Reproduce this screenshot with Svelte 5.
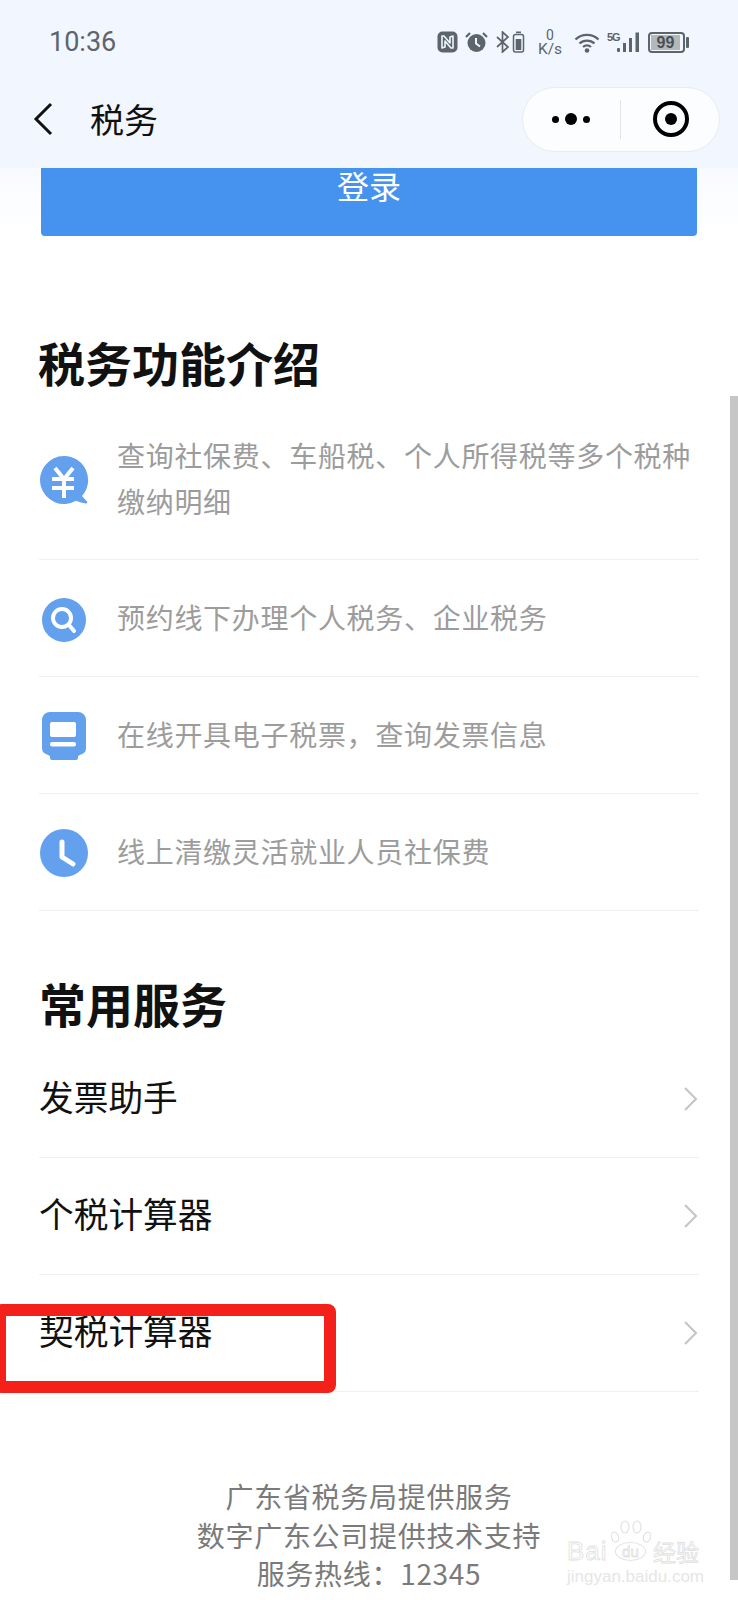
<script>
  const features = [
    { kind: 'yen', lines: ['查询社保费、车船税、个人所得税等多个税种', '缴纳明细'] },
    { kind: 'search', lines: ['预约线下办理个人税务、企业税务'] },
    { kind: 'ticket', lines: ['在线开具电子税票\uFF0C查询发票信息'] },
    { kind: 'clock', lines: ['线上清缴灵活就业人员社保费'] }
  ];
  const services = ['发票助手', '个税计算器', '契税计算器'];
  const hotline = '服务热线\uFF1A12345';
</script>

<div class="page">
  <header class="top">
    <div class="status">
      <span class="time">10:36</span>
      <div class="status-icons">
        <svg class="si" width="21" height="22" viewBox="0 0 21 22">
          <rect x="0.5" y="0.5" width="20" height="21" rx="5" fill="#5c646c" />
          <path d="M5 5v12l3-1V10l6 7h2V5l-3 1v6L7 5z" fill="none" stroke="#f2f7ff" stroke-width="1.6" stroke-linejoin="round" />
        </svg>
        <svg class="si" width="23" height="22" viewBox="0 0 23 22">
          <circle cx="11.5" cy="12" r="9" fill="#5c646c" />
          <path d="M1 6l4-4M22 6l-4-4" stroke="#5c646c" stroke-width="2.2" fill="none" />
          <path d="M11 7v5.5l4 3" stroke="#f2f7ff" stroke-width="2" fill="none" />
        </svg>
        <svg class="si" width="30" height="22" viewBox="0 0 30 22">
          <path d="M2 6l11 10-5.500 5V1L13 6 2 16" stroke="#5c646c" stroke-width="1.7" fill="none" />
          <rect x="18.500" y="3.500" width="10" height="17.500" rx="2" fill="none" stroke="#5c646c" stroke-width="1.500" />
          <rect x="21" y="0.500" width="5" height="1.600" fill="#5c646c" />
          <rect x="20.700" y="8" width="5.600" height="11" fill="#5c646c" />
        </svg>
        <div class="speed"><span>0</span><span class="ks">K/s</span></div>
        <svg class="si wifi" width="26" height="21" viewBox="0 0 26 21">
          <path d="M1.500 7.500a16.500 16.500 0 0 1 23 0M5.500 11.500a11 11 0 0 1 15 0M9 15a6 6 0 0 1 8 0" stroke="#5c646c" stroke-width="2.300" fill="none" />
          <circle cx="13" cy="18.500" r="2.300" fill="#5c646c" />
        </svg>
        <div class="net">
          <span class="five">5G</span>
          <svg width="23" height="21" viewBox="0 0 23 21">
            <rect x="0" y="16" width="3" height="4" rx="1" fill="#5c646c" />
            <rect x="6" y="11" width="3" height="9" fill="#5c646c" />
            <rect x="12" y="6" width="3" height="14" fill="#5c646c" />
            <rect x="18.500" y="0.500" width="3.500" height="19.500" fill="#5c646c" />
          </svg>
        </div>
        <div class="battery"><div class="cell"><span>99</span></div><i></i></div>
      </div>
    </div>
    <div class="nav">
      <svg class="back" width="20" height="34" viewBox="0 0 20 34">
        <path d="M18 2L3 17l15 15" fill="none" stroke="#111" stroke-width="3" />
      </svg>
      <span class="nav-title">税务</span>
      <div class="capsule">
        <div class="dots"><i></i><b></b><i></i></div>
        <span class="sep"></span>
        <svg width="40" height="40" viewBox="0 0 40 40">
          <circle cx="20" cy="20" r="16" fill="none" stroke="#000" stroke-width="4" />
          <circle cx="20" cy="20" r="6" fill="#000" />
        </svg>
      </div>
    </div>
  </header>

  <main class="content">
    <button class="login">登录</button>

    <h2 class="intro-title">税务功能介绍</h2>
    <ul class="features">
      {#each features as f}
        <li class="feature">
          <svg class="ficon" width="50" height="50" viewBox="0 0 50 50">
            {#if f.kind === 'yen'}
              <path d="M25 1A24 24 0 1 0 37 45.800Q42 48 47 48.500Q49 48.500 48 46.500L43 41A24 24 0 0 0 25 1Z" fill="#63a0ee" />
              <path d="M16 13l9 11 9-11M13 24h22M13 33h22M25 24v19" fill="none" stroke="#fff" stroke-width="4" />
            {:else if f.kind === 'search'}
              <circle cx="25" cy="27" r="22" fill="#63a0ee" />
              <circle cx="23" cy="25" r="9" fill="none" stroke="#fff" stroke-width="4" />
              <path d="M30 32l5 6" stroke="#fff" stroke-width="4" stroke-linecap="round" />
            {:else if f.kind === 'ticket'}
              <path d="M11 2h28a8 8 0 0 1 8 8v28q0 3-2 5l-6 3v2q0 2-2 2H13q-2 0-2-2v-2l-6-3q-2-2-2-5V10a8 8 0 0 1 8-8z" fill="#63a0ee" />
              <rect x="11" y="12" width="26" height="15" rx="2" fill="#fff" />
              <rect x="11" y="32" width="26" height="4.500" rx="2" fill="#fff" />
            {:else}
              <circle cx="25" cy="26" r="24" fill="#63a0ee" />
              <path d="M23 15v15l11 7" fill="none" stroke="#fff" stroke-width="5" stroke-linecap="round" stroke-linejoin="round" />
            {/if}
          </svg>
          <div class="ftext">
            {#each f.lines as line}<div>{line}</div>{/each}
          </div>
        </li>
      {/each}
    </ul>

    <h2 class="services-title">常用服务</h2>
    <ul class="services">
      {#each services as s}
        <li class="service">
          <span class="service-name">{s}</span>
          <svg width="16" height="26" viewBox="0 0 16 26">
            <path d="M2 2l11 11L2 24" fill="none" stroke="#c4c4c4" stroke-width="2" />
          </svg>
        </li>
      {/each}
    </ul>

    <footer class="foot">
      <div>广东省税务局提供服务</div>
      <div>数字广东公司提供技术支持</div>
      <div>{hotline}</div>
    </footer>
  </main>

  <div class="scrollbar"></div>

  <div class="annotation"></div>

  <div class="watermark">
    <svg class="paw" width="40" height="24" viewBox="0 0 40 24">
      <g fill="none" stroke="#e2e2e2" stroke-width="1.200">
        <ellipse cx="4" cy="17" rx="3.500" ry="5" transform="rotate(-20 4 17)" />
        <ellipse cx="14" cy="7" rx="4" ry="6" />
        <ellipse cx="26" cy="7" rx="4" ry="6" />
        <ellipse cx="36" cy="17" rx="3.500" ry="5" transform="rotate(20 36 17)" />
      </g>
    </svg>
    <div class="wm-main"><span class="bai">Bai</span><span class="du">du</span><span class="jy">经验</span></div>
    <div class="wm-sub">jingyan.baidu.com</div>
  </div>
</div>

<style>
  :global(body) {
    margin: 0;
    background: #fff;
  }
  .page {
    position: relative;
    width: 738px;
    height: 1600px;
    overflow: hidden;
    font-family: "Noto Sans CJK SC", "Noto Sans", sans-serif;
    background: linear-gradient(#f7faff 0, #f7faff 168px, #fff 232px);
  }
  .top {
    height: 168px;
    background: #f2f7ff;
  }
  .status {
    height: 84px;
    display: flex;
    align-items: center;
    justify-content: space-between;
    padding: 0 49px 0 49px;
  }
  .time {
    font-family: Roboto, sans-serif;
    font-size: 27px;
    color: #5c646c;
  }
  .status-icons {
    display: flex;
    align-items: center;
    gap: 7px;
    height: 22px;
  }
  .si {
    display: block;
    flex: none;
  }
  .speed {
    display: flex;
    flex-direction: column;
    align-items: center;
    width: 26px;
    margin: 0 4px 0 5px;
    font-family: Roboto, sans-serif;
    color: #5c646c;
    font-size: 14px;
    line-height: 14px;
  }
  .ks {
    font-size: 15.500px;
  }
  .net {
    display: flex;
    align-items: flex-end;
  }
  .five {
    font-family: "Liberation Sans", sans-serif;
    font-size: 11px;
    font-weight: 700;
    line-height: 11px;
    color: #5c646c;
    align-self: flex-start;
    width: 10px;
    white-space: nowrap;
    letter-spacing: -1.200px;
  }
  .battery {
    display: flex;
    align-items: center;
    gap: 1px;
    margin-left: 1px;
  }
  .cell {
    box-sizing: border-box;
    width: 37px;
    height: 21px;
    border: 2px solid #5c646c;
    border-radius: 4px;
    padding: 1px;
  }
  .cell span {
    display: block;
    width: 29px;
    height: 15px;
    background: #b4b8b9;
    font-family: "Liberation Sans", sans-serif;
    font-size: 16px;
    font-weight: 700;
    line-height: 15px;
    color: #4a5056;
    text-align: center;
  }
  .battery i {
    width: 3px;
    height: 11px;
    background: #5c646c;
    border-radius: 1px;
  }
  .nav {
    height: 70px;
    display: flex;
    align-items: center;
    padding-left: 33px;
  }
  .back {
    display: block;
  }
  .nav-title {
    margin-left: 37px;
    font-size: 34px;
    line-height: 40px;
    color: #111;
  }
  .capsule {
    margin-left: auto;
    margin-right: 18px;
    box-sizing: border-box;
    width: 198px;
    height: 65px;
    border-radius: 33px;
    border: 1.500px solid #e8ecf2;
    background: #fcfdff;
    display: flex;
    align-items: center;
    padding-left: 28.500px;
  }
  .dots {
    display: flex;
    align-items: center;
    gap: 6px;
  }
  .dots i {
    width: 7px;
    height: 7px;
    border-radius: 50%;
    background: #000;
  }
  .dots b {
    width: 12px;
    height: 12px;
    border-radius: 50%;
    background: #000;
  }
  .sep {
    width: 1px;
    height: 39px;
    margin-left: 30px;
    background: #e2e6ea;
  }
  .capsule svg {
    margin-left: 30px;
  }
  .content {
    display: flow-root;
  }
  .login {
    display: block;
    box-sizing: border-box;
    width: 656px;
    height: 68px;
    margin: 0 0 0 41px;
    padding: 0 0 34px;
    border: 0;
    border-radius: 0 0 4px 4px;
    background: #4593ee;
    color: #fff;
    font: 400 32px/34px "Noto Sans CJK SC", sans-serif;
    text-align: center;
  }
  h2 {
    margin: 0;
    font-size: 47px;
    line-height: 60px;
    font-weight: 700;
    color: #111;
  }
  .intro-title {
    margin: 96px 0 8px 38px;
  }
  ul {
    list-style: none;
    margin: 0 39px;
    padding: 0;
  }
  .feature {
    box-sizing: border-box;
    min-height: 117px;
    display: flex;
    align-items: center;
    gap: 28px;
    border-bottom: 1px solid #efefef;
  }
  .feature:first-child {
    height: 160px;
  }
  .ficon {
    flex: none;
    display: block;
  }
  .ftext {
    padding-bottom: 3px;
    font-size: 28px;
    line-height: 46px;
    color: #9c9c9c;
    white-space: nowrap;
    letter-spacing: 0.7px;
  }
  .services-title {
    margin: 62px 0 8px 39px;
  }
  .service {
    box-sizing: border-box;
    height: 117px;
    display: flex;
    align-items: center;
    justify-content: space-between;
    border-bottom: 1px solid #efefef;
    font-size: 34.700px;
    color: #111;
  }
  .service-name {
    padding-bottom: 6px;
  }
  .foot {
    margin-top: 85px;
    text-align: center;
    font-size: 28px;
    line-height: 38.500px;
    color: #7a7a7a;
    letter-spacing: 0.7px;
  }
  .scrollbar {
    position: absolute;
    left: 730px;
    top: 396px;
    width: 8px;
    height: 1184px;
    background: #c6c6c6;
  }
  .annotation {
    position: absolute;
    left: -6px;
    top: 1304px;
    width: 342px;
    height: 89px;
    box-sizing: border-box;
    border: 12px solid #f4201a;
    border-radius: 8px;
  }
  .watermark {
    position: absolute;
    left: 567px;
    top: 1520px;
    width: 132px;
    font-family: "Liberation Sans", sans-serif;
  }
  .paw {
    position: absolute;
    left: 44px;
    top: 0;
  }
  .wm-main {
    margin-top: 20px;
    display: flex;
    align-items: center;
    height: 22px;
    white-space: nowrap;
    color: transparent;
    -webkit-text-stroke: 0.8px #e0e0e0;
  }
  .bai {
    width: 44px;
    font-size: 26px;
    letter-spacing: 1px;
  }
  .du {
    box-sizing: border-box;
    width: 32px;
    height: 19px;
    margin: 0 7px 0 5px;
    border: 1px solid #e2e2e2;
    border-radius: 50%;
    font-size: 15px;
    line-height: 17px;
    text-align: center;
  }
  .jy {
    font-size: 23px;
    font-family: "Noto Sans CJK SC", sans-serif;
  }
  .wm-sub {
    margin-top: 6px;
    font-size: 17px;
    line-height: 18px;
    white-space: nowrap;
    color: #e6e6e6;
  }
</style>
